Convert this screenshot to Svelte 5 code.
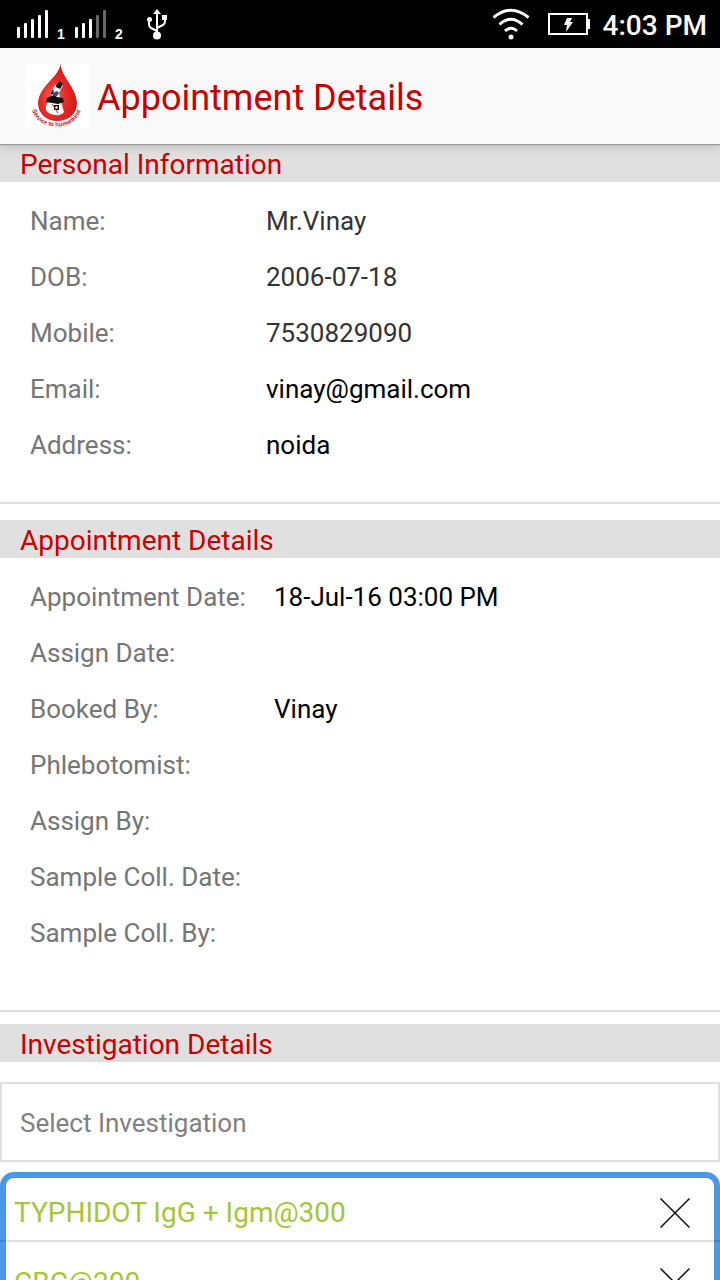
<script>
  const personal = [
    { label: 'Name:', value: 'Mr.Vinay', soft: true },
    { label: 'DOB:', value: '2006-07-18', soft: true },
    { label: 'Mobile:', value: '7530829090', soft: true },
    { label: 'Email:', value: 'vinay@gmail.com' },
    { label: 'Address:', value: 'noida' }
  ];
  const appointment = [
    { label: 'Appointment Date:', value: '18-Jul-16 03:00 PM' },
    { label: 'Assign Date:', value: '' },
    { label: 'Booked By:', value: 'Vinay' },
    { label: 'Phlebotomist:', value: '' },
    { label: 'Assign By:', value: '' },
    { label: 'Sample Coll. Date:', value: '' },
    { label: 'Sample Coll. By:', value: '' }
  ];
  let investigations = $state(['TYPHIDOT IgG + Igm@300', 'CBC@200']);
  let query = $state('');

  function remove(name) {
    investigations = investigations.filter((item) => item !== name);
  }
</script>

{#snippet signal(strength)}
  <svg width="32" height="28" viewBox="0 0 32 28" aria-hidden="true">
    {#each [11, 15, 19, 23, 28] as height, i}
      <rect x={i * 7} y={28 - height} width="3" {height} rx="1" fill={i < strength ? '#fff' : '#666'} />
    {/each}
  </svg>
{/snippet}

<div class="screen">
  <div class="status">
    <div class="radios">
      {@render signal(5)}
      <span class="sim">1</span>
      {@render signal(3)}
      <span class="sim">2</span>
      <svg class="usb" width="22" height="32" viewBox="0 0 22 32" fill="none" stroke="#fff" stroke-width="2" aria-hidden="true">
        <path d="M11 5V27M11 23L5 20Q3 19 3 16V11M11 20L17 17Q19 16 19 13V9" />
        <path d="M11 1L15 6H7Z" fill="#fff" stroke="none" />
        <circle cx="11" cy="27.500" r="4" fill="#fff" stroke="none" />
        <circle cx="3.500" cy="11.500" r="2.500" fill="#fff" stroke="none" />
        <rect x="16" y="7" width="5" height="5" fill="#fff" stroke="none" />
      </svg>
    </div>
    <div class="system">
      <svg width="38" height="32" viewBox="0 0 38 32" fill="none" stroke="#fff" stroke-width="3" aria-hidden="true">
        <path d="M1.500 9.500Q19 -5 36.500 9.500M7.500 16.500Q19 6 30.500 16.500M13 23Q19 17.500 25 23" />
        <circle cx="19" cy="29" r="2.500" fill="#fff" stroke="none" />
      </svg>
      <svg width="42" height="22" viewBox="0 0 42 22" aria-hidden="true">
        <rect x="1" y="1" width="38" height="20" fill="none" stroke="#fff" stroke-width="2" />
        <path d="M40 6h2v10h-2z" fill="#fff" />
        <path d="M19 5h5l-2 4h3l-7 10 1-7h-3z" fill="#fff" />
      </svg>
      <time>4:03 PM</time>
    </div>
  </div>

  <header>
    <svg width="64" height="64" viewBox="0 0 64 64" role="img" aria-label="Service to humankind">
      <defs>
        <radialGradient id="drop" cx="0.4" cy="0.6" r="0.65">
          <stop offset="0" stop-color="#ef7068" />
          <stop offset="0.5" stop-color="#e62a25" />
          <stop offset="1" stop-color="#c9191a" />
        </radialGradient>
        <path id="motto" d="M7 46Q12 62 32 62.500Q52 62 57 43" />
      </defs>
      <rect width="64" height="64" fill="#fff" />
      <path d="M35.500 0C34 13 14 22 13 39C13 50 22 57 32 57C43 57 52 50 52 39C51 23 37 14 35.500 0Z" fill="url(#drop)" />
      <path d="M23 38C20 42 20 47 24 49C29 52 37 52 39 48L36 38Z" fill="#fff" />
      <path d="M28 24L34 17L38 21L34 29L35 34H27Z" fill="#fff" />
      <path d="M31 21L34 17L38 20L35 25L31 23ZM22 34L29 31L32 33L38 34L39 38L33 40L27 39L21 38ZM27 27L29 26L28 30H26ZM29 41H34V46H29Z" fill="#111" />
      <path d="M28 29L32 27L34 29L32 32H28Z" fill="#294b80" />
      <circle cx="31.500" cy="43.500" r="1.200" fill="#fff" />
      <path d="M27 40L33 49" stroke="#c22" fill="none" />
      <text font-family="Liberation Sans, sans-serif" font-size="6" font-weight="700" fill="#c41420"><textPath href="#motto">Service to humankind</textPath></text>
    </svg>
    <h1>Appointment Details</h1>
  </header>

  <main>
    <section class="personal">
      <h2>Personal Information</h2>
      <dl>
        {#each personal as row}
          <div>
            <dt>{row.label}</dt>
            <dd class:soft={row.soft}>{row.value}</dd>
          </div>
        {/each}
      </dl>
    </section>

    <section class="appointment">
      <h2>Appointment Details</h2>
      <dl>
        {#each appointment as row}
          <div>
            <dt>{row.label}</dt>
            <dd>{row.value}</dd>
          </div>
        {/each}
      </dl>
    </section>

    <section class="investigation">
      <h2>Investigation Details</h2>
      <input type="text" aria-label="Select Investigation" placeholder="Select Investigation" bind:value={query} />
      <ul>
        {#each investigations as name}
          <li>
            <span>{name}</span>
            <button type="button" aria-label={`Remove ${name}`} onclick={() => remove(name)}>
              <svg width="30" height="30" viewBox="0 0 30 30" aria-hidden="true">
                <path d="M0.500 0.500L29.500 29.500M29.500 0.500L0.500 29.500" stroke="#111" stroke-width="1.500" />
              </svg>
            </button>
          </li>
        {/each}
      </ul>
    </section>
  </main>
</div>

<style>
  :global(body) {
    margin: 0;
    background: #fff;
  }
  .screen {
    display: flex;
    flex-direction: column;
    height: 100vh;
    font: 26px/32px Roboto, sans-serif;
    color: #000;
  }
  svg {
    display: block;
    flex: none;
  }
  .status {
    display: flex;
    flex: none;
    align-items: center;
    justify-content: space-between;
    height: 48px;
    padding: 0 13px 0 17px;
    box-sizing: border-box;
    background: #000;
    color: #fff;
  }
  .radios,
  .system {
    display: flex;
    align-items: center;
  }
  .sim {
    align-self: flex-end;
    width: 18px;
    padding-left: 8px;
    font: 700 14px/12px "Liberation Sans", sans-serif;
  }
  .usb {
    margin-left: 13px;
  }
  .system svg {
    margin-right: 18px;
  }
  .system svg + svg {
    margin-right: 13px;
  }
  time {
    padding-top: 4px;
    font-size: 28px;
    font-weight: 500;
  }
  header {
    position: relative;
    display: flex;
    flex: none;
    align-items: center;
    gap: 8px;
    height: 96px;
    padding: 0 25px;
    background: #f9f9f9;
    box-shadow: 0 1px 1px #999, 0 2px 10px rgba(0, 0, 0, 0.2);
  }
  h1 {
    margin: 0;
    padding-top: 4px;
    font-size: 36px;
    line-height: 44px;
    font-weight: 400;
    color: #c80000;
  }
  main {
    flex: 1;
    min-height: 0;
    overflow-y: auto;
    scrollbar-width: none;
  }
  h2 {
    margin: 0;
    padding: 4px 20px 0;
    background: #e0e0e0;
    color: #c80000;
    font-size: 28px;
    line-height: 34px;
    font-weight: 400;
  }
  dl {
    margin: 0;
    padding: 11px 30px 0;
  }
  dl div {
    display: grid;
    grid-template-columns: 236px 1fr;
    align-items: center;
    min-height: 56px;
  }
  .appointment dl div {
    grid-template-columns: 244px 1fr;
  }
  dt {
    color: #757575;
  }
  dd {
    margin: 0;
  }
  dd.soft {
    color: #333;
  }
  .personal {
    padding-bottom: 29px;
    border-bottom: 2px solid #e0e0e0;
    margin-bottom: 16px;
  }
  .appointment {
    padding-bottom: 49px;
    border-bottom: 2px solid #e0e0e0;
    margin-bottom: 12px;
  }
  input {
    display: block;
    width: 100%;
    height: 80px;
    box-sizing: border-box;
    margin: 20px 0 10px;
    padding: 2px 18px 0;
    border: 2px solid #e0e0e0;
    border-radius: 0;
    background: #fff;
    font: inherit;
  }
  input::placeholder {
    color: #808080;
    opacity: 1;
  }
  ul {
    margin: 0;
    padding: 0;
    list-style: none;
    border: 6px solid #4a98e6;
    border-radius: 14px;
  }
  li {
    display: flex;
    align-items: center;
    justify-content: space-between;
    height: 70px;
    box-sizing: border-box;
    margin: 0 -6px;
    padding: 14px 24px 0 14px;
    color: #a4c639;
    font-size: 28px;
  }
  li + li {
    border-top: 2px solid rgba(0, 0, 0, 0.12);
  }
  li:first-child {
    height: 62px;
    padding-top: 8px;
  }
  button {
    padding: 6px;
    border: 0;
    background: none;
    cursor: pointer;
  }
</style>
